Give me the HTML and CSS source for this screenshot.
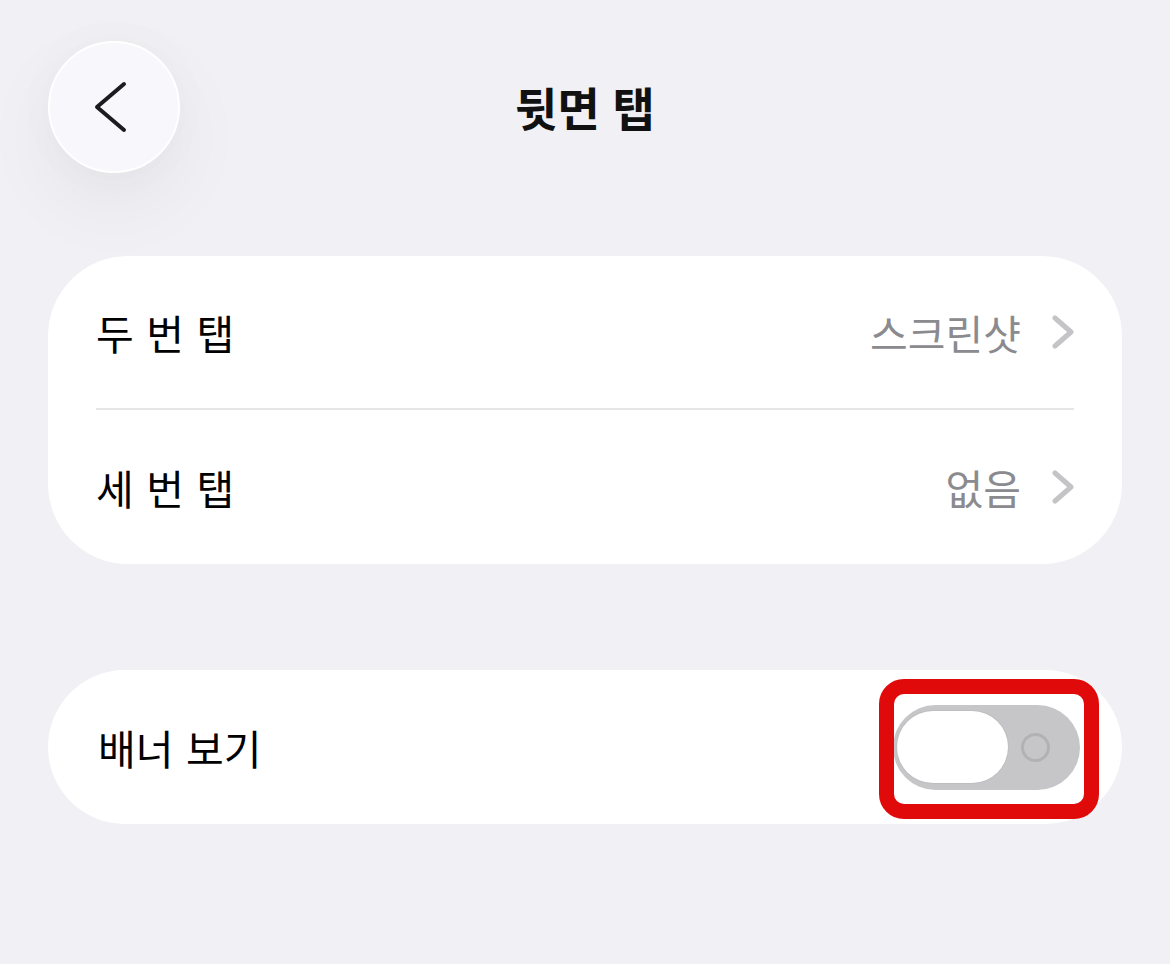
FILE: index.html
```html
<!DOCTYPE html>
<html lang="ko">
<head>
<meta charset="utf-8">
<title>뒷면 탭</title>
<link rel="stylesheet" href="styles.css">
</head>
<body>
<div class="page">
  <header class="header">
    <button class="back" aria-label="뒤로">
      <svg class="back-icon" viewBox="0 0 132 132" width="132" height="132">
        <path d="M76 43 L49 66 L76 89" fill="none" stroke="#1c1c1e" stroke-width="4" stroke-linecap="round" stroke-linejoin="round"/>
      </svg>
    </button>
    <h1 class="title">뒷면 탭</h1>
    <div class="spacer"></div>
  </header>

  <section class="card list">
    <div class="row">
      <span class="label">두 번 탭</span>
      <span class="value">스크린샷</span>
      <svg class="chev" viewBox="0 0 24 34" width="24" height="34">
        <path d="M4 3 L20 17 L4 31" fill="none" stroke="#c4c4c7" stroke-width="5" stroke-linecap="round" stroke-linejoin="round"/>
      </svg>
    </div>
    <div class="divider"></div>
    <div class="row">
      <span class="label">세 번 탭</span>
      <span class="value">없음</span>
      <svg class="chev" viewBox="0 0 24 34" width="24" height="34">
        <path d="M4 3 L20 17 L4 31" fill="none" stroke="#c4c4c7" stroke-width="5" stroke-linecap="round" stroke-linejoin="round"/>
      </svg>
    </div>
  </section>

  <section class="card single">
    <div class="row row-toggle">
      <span class="label">배너 보기</span>
      <div class="toggle-wrap">
        <div class="toggle">
          <div class="knob"></div>
          <div class="off-mark"></div>
        </div>
        <div class="highlight"></div>
      </div>
    </div>
  </section>
</div>
</body>
</html>
```

FILE: styles.css
```css
* { box-sizing: border-box; }

html, body {
  margin: 0;
  padding: 0;
}

body {
  background: #f0f0f5;
  font-family: "Noto Sans CJK KR", "Noto Sans", sans-serif;
  color: #111;
}

.page {
  padding: 41px 48px 0;
}

.header {
  position: relative;
  z-index: 2;
  display: grid;
  grid-template-columns: 132px 1fr 132px;
  align-items: center;
  height: 132px;
}

.back {
  width: 132px;
  height: 132px;
  border-radius: 50%;
  background: #f8f8fc;
  border: 2px solid #ffffff;
  padding: 0;
  display: flex;
  align-items: center;
  justify-content: center;
  box-shadow: 0 30px 80px rgba(0, 0, 0, 0.055), 0 0 50px rgba(0, 0, 0, 0.025);
}

.back-icon {
  display: block;
  margin: -2px;
}

.title {
  margin: 0;
  text-align: center;
  font-size: 46px;
  font-weight: 700;
  line-height: 1;
  color: #111;
  position: relative;
  top: -1px;
}

.card {
  background: #ffffff;
  position: relative;
  z-index: 1;
}

.list {
  margin-top: 83px;
  border-radius: 80px;
  padding: 0 48px;
}

.single {
  margin-top: 106px;
  border-radius: 77px;
  padding: 0 42px 0 50px;
}

.row {
  display: flex;
  align-items: center;
  height: 152px;
}

.row + .divider + .row {
  height: 154px;
}

.label {
  flex: 1;
  font-size: 41px;
  line-height: 1;
  word-spacing: 1px;
  color: #000;
}

.value {
  font-size: 41px;
  line-height: 1;
  color: #8b8b8f;
  margin-right: 30px;
}

.chev {
  display: block;
  margin-right: -1px;
}

.divider {
  height: 2px;
  background: #e6e6e8;
}

.row-toggle {
  height: 154px;
}

.toggle-wrap {
  position: relative;
}

.toggle {
  width: 187px;
  height: 85px;
  border-radius: 43px;
  background: #c6c6c9;
  display: flex;
  align-items: center;
  padding-left: 4px;
}

.knob {
  width: 111px;
  height: 72px;
  border-radius: 36px;
  background: #ffffff;
  box-shadow: 0 0 0 1px rgba(0, 0, 0, 0.04);
}

.off-mark {
  width: 29px;
  height: 29px;
  border-radius: 50%;
  border: 3px solid #b2b2b5;
  margin-left: 13px;
}

.highlight {
  position: absolute;
  left: -14px;
  right: -19px;
  top: -26px;
  bottom: -29px;
  border: 15px solid #e00a0a;
  border-radius: 25px;
  pointer-events: none;
}
```
